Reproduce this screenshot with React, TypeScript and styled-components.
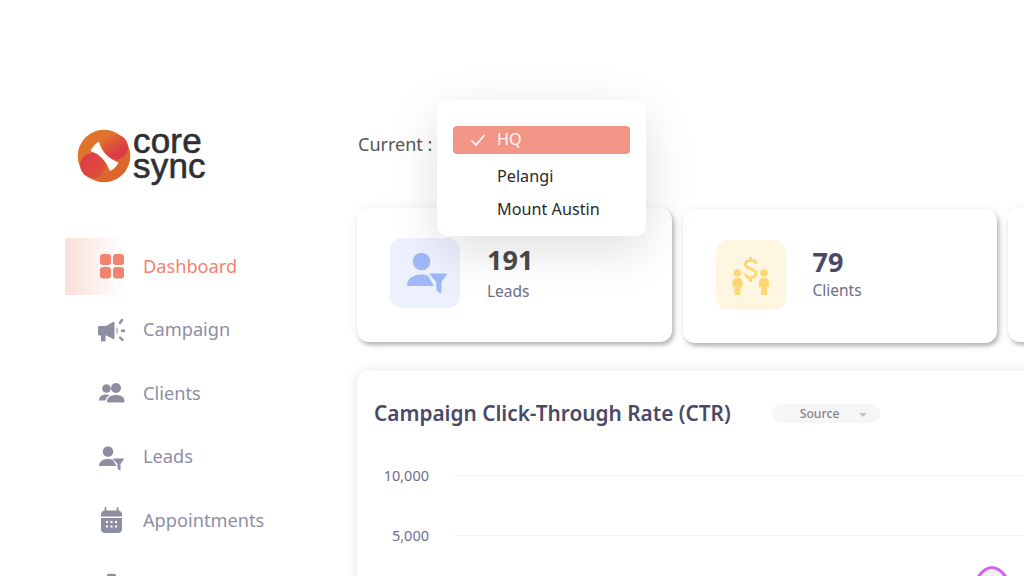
import React from 'react';
import styled, { createGlobalStyle } from 'styled-components';

const GlobalStyle = createGlobalStyle`
    html, body {
        margin: 0;
        padding: 0;
        background: #ffffff;
    }
    body {
        font-family: 'Noto Sans', 'Open Sans', sans-serif;
    }
`;

const Page = styled.div`
    display: flex;
    width: 1024px;
    height: 576px;
    overflow: hidden;
    background: #ffffff;
`;

const Sidebar = styled.aside`
    flex: 0 0 357px;
    padding: 128px 0 0 65px;
    box-sizing: border-box;
`;

const Logo = styled.div`
    display: flex;
    align-items: center;
    gap: 2px;
    height: 55px;
    margin: 0 0 55px 12px;
`;

const LogoText = styled.div`
    font-family: 'Liberation Sans', sans-serif;
    font-size: 35px;
    line-height: 25px;
    letter-spacing: 0.2px;
    color: #2f2f33;
    margin-top: -5px;
    -webkit-text-stroke: 0.6px #2f2f33;
`;

const Nav = styled.nav`
    display: flex;
    flex-direction: column;
    gap: 6.5px;
`;

const NavItem = styled.div<{ $active?: boolean }>`
    display: flex;
    align-items: center;
    gap: 18px;
    width: 260px;
    height: 57px;
    padding-left: 33px;
    box-sizing: border-box;
    font-size: 18.2px;
    color: ${(props) => (props.$active ? '#f2836f' : '#8e8ea3')};
    background: ${(props) =>
        props.$active ? 'linear-gradient(90deg, #f9dfda 0%, #ffffff 58px)' : 'transparent'};
`;

const NavLabel = styled.span`
    margin-bottom: 2px;
`;

const NavIcon = styled.svg`
    flex: 0 0 27px;
    width: 27px;
    height: 27px;
`;

const Main = styled.main`
    flex: 1 0 auto;
    position: relative;
    min-width: 0;
`;

const CurrentRow = styled.div`
    height: 208px;
    padding: 132px 0 0 1px;
    box-sizing: border-box;
    font-size: 18px;
    line-height: 24px;
    color: #565656;
`;

const Dropdown = styled.div`
    position: absolute;
    left: 80px;
    top: 100px;
    width: 209px;
    height: 136px;
    padding: 26px 16px 0;
    box-sizing: border-box;
    background: #ffffff;
    border-radius: 10px;
    box-shadow: 0 14px 50px rgba(0, 0, 0, 0.13);
    z-index: 2;
`;

const Option = styled.div<{ $selected?: boolean }>`
    display: flex;
    align-items: center;
    height: ${(props) => (props.$selected ? '28px' : '33px')};
    margin-bottom: ${(props) => (props.$selected ? '6px' : '0')};
    padding: 0 0 2px 44px;
    box-sizing: border-box;
    position: relative;
    border-radius: 4px;
    font-size: 16.2px;
    color: ${(props) => (props.$selected ? '#fff6f3' : '#2a2a2a')};
    background: ${(props) => (props.$selected ? '#f19686' : 'transparent')};
`;

const Check = styled.svg`
    position: absolute;
    left: 17px;
    top: 7px;
    width: 16px;
    height: 14px;
`;

const Cards = styled.div`
    display: flex;
    align-items: flex-start;
    gap: 11px;
`;

const Card = styled.div<{ $offset?: number; $top?: number }>`
    flex: 0 0 314.5px;
    display: flex;
    align-items: flex-start;
    gap: 27px;
    height: 133.5px;
    margin-top: ${(props) => props.$offset || 0}px;
    padding: ${(props) => props.$top || 30}px 0 0 33px;
    box-sizing: border-box;
    background: #ffffff;
    border-radius: 12px;
    box-shadow: 2px 3px 4px rgba(0, 0, 0, 0.28), 0 0 14px rgba(0, 0, 0, 0.05);
`;

const IconTile = styled.div<{ $bg: string }>`
    flex: 0 0 70px;
    display: flex;
    align-items: center;
    justify-content: center;
    width: 70px;
    height: 70px;
    border-radius: 12px;
    background: ${(props) => props.$bg};
`;

const CardText = styled.div`
    margin-top: 7px;
`;

const CardNumber = styled.div<{ $color: string }>`
    font-size: 27px;
    line-height: 30px;
    font-weight: 700;
    color: ${(props) => props.$color};
`;

const CardLabel = styled.div<{ $gap: number }>`
    margin-top: ${(props) => props.$gap}px;
    font-size: 15.5px;
    line-height: 22px;
    color: #6e6e88;
`;

const ChartCard = styled.section`
    position: relative;
    width: 760px;
    height: 300px;
    margin-top: 28px;
    padding: 29px 18px 0 17px;
    box-sizing: border-box;
    background: #ffffff;
    border-radius: 12px;
    box-shadow: 0 0 14px rgba(0, 0, 0, 0.1);
`;

const ChartHeader = styled.div`
    display: flex;
    align-items: center;
    gap: 41px;
    height: 26px;
`;

const ChartTitle = styled.h2`
    margin: 0;
    font-size: 20.8px;
    font-weight: 600;
    color: #4a4a68;
`;

const SourcePill = styled.div`
    display: flex;
    align-items: center;
    gap: 20px;
    width: 108px;
    height: 19px;
    margin-top: 2px;
    padding-left: 28px;
    box-sizing: border-box;
    border-radius: 10px;
    background: #f6f6f7;
    font-size: 12.2px;
    font-weight: 500;
    color: #85858c;
`;

const Caret = styled.span`
    width: 0;
    height: 0;
    border-left: 4px solid transparent;
    border-right: 4px solid transparent;
    border-top: 4px solid #c4c4cb;
    margin-top: 2px;
`;

const Grid = styled.div`
    display: flex;
    flex-direction: column;
    gap: 40px;
    margin-top: 39px;
`;

const GridRow = styled.div`
    display: flex;
    align-items: center;
    gap: 24px;
    height: 20px;
`;

const AxisLabel = styled.span`
    flex: 0 0 55px;
    text-align: right;
    font-size: 14.5px;
    color: #6e6e88;
`;

const GridLine = styled.span`
    flex: 1;
    height: 1px;
    margin-top: 2px;
    background: #f3f3f4;
`;

const Curve = styled.svg`
    position: absolute;
    left: 616px;
    top: 190px;
    width: 40px;
    height: 30px;
`;

const grey = '#8e8ea3';

const App = (): JSX.Element => {
    return (
        <Page>
            <GlobalStyle />
            <Sidebar>
                <Logo>
                    <svg width="54" height="54" viewBox="0 0 54 54">
                        <defs>
                            <linearGradient id="logoBase" x1="0" y1="0" x2="1" y2="1">
                                <stop offset="0" stopColor="#e27a2c" />
                                <stop offset="1" stopColor="#dc5f2c" />
                            </linearGradient>
                            <linearGradient id="logoUpper" x1="0.2" y1="0" x2="0.8" y2="1">
                                <stop offset="0" stopColor="#e0702e" />
                                <stop offset="0.7" stopColor="#dc3c44" />
                            </linearGradient>
                            <linearGradient id="logoLower" x1="0" y1="0.2" x2="1" y2="1">
                                <stop offset="0" stopColor="#dc3c48" />
                                <stop offset="1" stopColor="#df5238" />
                            </linearGradient>
                        </defs>
                        <circle cx="27" cy="27" r="26.3" fill="url(#logoBase)" />
                        <circle cx="15.8" cy="36.3" r="12.6" fill="url(#logoLower)" />
                        <circle cx="38.3" cy="18" r="12.6" fill="url(#logoUpper)" />
                        <path
                            d="M13.5 22 Q16.5 15.5 22 12.5 Q25.25 27 41.5 33.5 Q38.5 39.5 33 42 Q26.75 26 13.5 22 Z"
                            fill="#ffffff"
                        />
                    </svg>
                    <LogoText>
                        core
                        <br />
                        sync
                    </LogoText>
                </Logo>
                <Nav>
                    <NavItem $active>
                        <NavIcon viewBox="0 0 27 27" fill="#f2836f">
                            <rect x="2" y="1" width="11" height="11" rx="3" />
                            <rect x="15" y="1" width="11" height="11" rx="3" />
                            <rect x="2" y="14" width="11" height="11.5" rx="3" />
                            <rect x="15" y="14" width="11" height="11.5" rx="3" />
                        </NavIcon>
                        <NavLabel>Dashboard</NavLabel>
                    </NavItem>
                    <NavItem>
                        <NavIcon viewBox="0 0 27 27" fill={grey}>
                            <path d="M0 10.5 C0 9.5 .6 9 1.5 9 L8 9 L15 5 C15.7 4.7 16.5 5 16.5 6 L16.5 21 C16.5 22 15.7 22.3 15 22 L8.5 18.5 L7.5 18.5 L7.5 23 C7.5 24 7 24.5 6 24.5 L4.5 24.5 C3.5 24.5 3 24 3 23 L3 18.5 L1.5 18.5 C.6 18.5 0 18 0 17 Z" />
                            <path d="M18.5 10 C20 11 20 16.5 18.5 17.5 Z" />
                            <path d="M22 6 L24 3 M24 13.7 L27 13.7 M22 20.5 L24.5 23" stroke={grey} strokeWidth="2.4" strokeLinecap="round" />
                        </NavIcon>
                        <NavLabel>Campaign</NavLabel>
                    </NavItem>
                    <NavItem>
                        <NavIcon viewBox="0 0 27 27" fill={grey}>
                            <circle cx="8.5" cy="8.5" r="4.3" />
                            <circle cx="18" cy="8" r="5" />
                            <path d="M1 20.5 C1 16.5 4 14.5 8.5 14.5 C9.7 14.5 10.7 14.7 11.5 15 C9 16.5 7.7 18.5 7.5 20.5 Z" />
                            <path d="M9 21.5 C9 17 13 15 18 15 C23 15 26.5 17 26.5 21.5 C26.5 22 26 22.5 25.5 22.5 L10 22.5 C9.5 22.5 9 22 9 21.5 Z" />
                        </NavIcon>
                        <NavLabel>Clients</NavLabel>
                    </NavItem>
                    <NavItem>
                        <NavIcon viewBox="0 0 27 27" fill={grey}>
                            <circle cx="10" cy="7.5" r="5.3" />
                            <path d="M1 22 C1 17.5 5 15 10 15 C12 15 13.5 15.4 15 16 L18.5 22 Z" />
                            <path d="M14.5 14.5 L26.5 14.5 L22.5 20 L22.5 26 C22.5 26.6 21.8 26.7 21.4 26.2 L19.5 24.5 L19.5 20 Z" />
                        </NavIcon>
                        <NavLabel>Leads</NavLabel>
                    </NavItem>
                    <NavItem>
                        <NavIcon viewBox="0 0 27 27">
                            <path d="M7.5 1 L7.5 6 M19.5 1 L19.5 6" stroke={grey} strokeWidth="1.8" strokeLinecap="round" />
                            <path d="M3 8 C3 5 4.5 3.5 7 3.5 L20 3.5 C22.5 3.5 24 5 24 8 L24 9.5 L3 9.5 Z" fill={grey} />
                            <path d="M3 11 L24 11 L24 22 C24 24.5 22.5 26 20 26 L7 26 C4.5 26 3 24.5 3 22 Z" fill={grey} />
                            <g fill="#ffffff">
                                <rect x="8" y="14" width="2" height="2" />
                                <rect x="12.5" y="14" width="2" height="2" />
                                <rect x="17" y="14" width="2" height="2" />
                                <rect x="8" y="18.5" width="2" height="2" />
                                <rect x="12.5" y="18.5" width="2" height="2" />
                                <rect x="17" y="18.5" width="2" height="2" />
                            </g>
                        </NavIcon>
                        <NavLabel>Appointments</NavLabel>
                    </NavItem>
                    <NavItem>
                        <NavIcon viewBox="0 0 27 27" fill={grey}>
                            <path d="M9 7 L9 4.5 C9 3.5 10 2.8 11 2.8 L16 2.8 C17 2.8 18 3.5 18 4.5 L18 7 L23 7 C24.5 7 25.5 8 25.5 9.5 L25.5 22 C25.5 23.5 24.5 24.5 23 24.5 L4 24.5 C2.5 24.5 1.5 23.5 1.5 22 L1.5 9.5 C1.5 8 2.5 7 4 7 Z" />
                        </NavIcon>
                    </NavItem>
                </Nav>
            </Sidebar>
            <Main>
                <CurrentRow>Current :</CurrentRow>
                <Dropdown>
                    <Option $selected>
                        <Check viewBox="0 0 16 14" fill="none" stroke="#ffffff" strokeWidth="1.6">
                            <path d="M1.5 7.5 L6 12 L14.5 2" />
                        </Check>
                        HQ
                    </Option>
                    <Option>Pelangi</Option>
                    <Option>Mount Austin</Option>
                </Dropdown>
                <Cards>
                    <Card>
                        <IconTile $bg="#ecf1fd">
                            <svg width="46" height="42" viewBox="0 0 46 42" fill="#a0b8f8">
                                <circle cx="19.5" cy="9.5" r="8.8" />
                                <path d="M5 34 C5 26.5 11 22.5 19 22.5 C21.5 22.5 24 22.8 26 23.8 L32 34 Z" />
                                <path d="M27 21.5 L45.5 21.5 L39.5 30 L39.5 40 C39.5 41 38.5 41.5 37.7 41 L34.5 38.5 L34 30 Z" />
                            </svg>
                        </IconTile>
                        <CardText>
                            <CardNumber $color="#4a4a4a">191</CardNumber>
                            <CardLabel $gap={5}>Leads</CardLabel>
                        </CardText>
                    </Card>
                    <Card $offset={1} $top={31}>
                        <IconTile $bg="#fff6e2">
                            <svg width="40" height="40" viewBox="0 0 40 40" fill="#fbd777">
                                <circle cx="6.5" cy="18" r="3.8" />
                                <circle cx="33" cy="18" r="3.8" />
                                <path d="M1.5 27 C1.5 24 3.5 22.8 6.5 22.8 C9.5 22.8 11.5 24 11.5 27 L11.5 32 L9.5 32 L9.5 40 L3.5 40 L3.5 32 L1.5 32 Z" />
                                <path d="M28 27 C28 24 30 22.8 33 22.8 C36 22.8 38 24 38 27 L38 32 L36 32 L36 40 L30 40 L30 32 L28 32 Z" />
                                <path d="M25 9 C25 6.5 22.5 5.3 19.5 5.3 C16.5 5.3 14.5 7 14.5 9.5 C14.5 15 25 13 25 18.5 C25 21 22.5 22.7 19.5 22.7 C16.5 22.7 14.5 21 14.5 18.5 M19.5 2 L19.5 5.3 M19.5 22.7 L19.5 27" fill="none" stroke="#fbd777" strokeWidth="3" />
                            </svg>
                        </IconTile>
                        <CardText>
                            <CardNumber $color="#4a4a68">79</CardNumber>
                            <CardLabel $gap={2}>Clients</CardLabel>
                        </CardText>
                    </Card>
                    <Card />
                </Cards>
                <ChartCard>
                    <ChartHeader>
                        <ChartTitle>Campaign Click-Through Rate (CTR)</ChartTitle>
                        <SourcePill>
                            Source
                            <Caret />
                        </SourcePill>
                    </ChartHeader>
                    <Grid>
                        <GridRow>
                            <AxisLabel>10,000</AxisLabel>
                            <GridLine />
                        </GridRow>
                        <GridRow>
                            <AxisLabel>5,000</AxisLabel>
                            <GridLine />
                        </GridRow>
                    </Grid>
                    <Curve viewBox="0 0 40 30" fill="#f6ecfb" stroke="#cc66e6" strokeWidth="3">
                        <path d="M2 21 C7 12 13 6.5 19 6.5 C25 6.5 31 12 36 21" />
                    </Curve>
                </ChartCard>
            </Main>
        </Page>
    );
};

export default App;
